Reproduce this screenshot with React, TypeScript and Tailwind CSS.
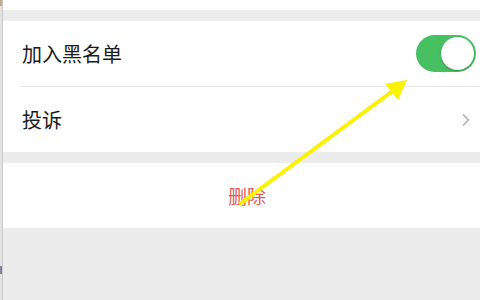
import { ChevronRight } from "lucide-react";

const font = { fontFamily: '"Noto Sans CJK SC", "Noto Sans", sans-serif' };

function Toggle() {
  return (
    <div className="flex h-[37px] w-[60px] items-center justify-end rounded-full bg-[#46c060] p-[2px]">
      <div className="h-[33px] w-[33px] rounded-full bg-white shadow-[0_1px_2px_rgba(0,0,0,0.25)]" />
    </div>
  );
}

export default function App() {
  return (
    <div className="relative flex h-[300px] w-[480px] overflow-hidden bg-[#ececec]" style={font}>
      {/* left edge of a neighbouring window */}
      <div className="flex w-[3px] flex-col justify-between border-r border-[#c9c9c9] bg-[#e2e2e2]">
        <div className="h-[6px] bg-[#c7a98a]" />
        <div className="mb-[26px] h-[8px] bg-[#7d8597]" />
      </div>

      <div className="flex flex-1 flex-col">
        <div className="h-[10px] bg-white" />
        <div className="h-[11px]" />

        <div className="bg-white">
          <div className="flex h-[65px] items-center justify-between pl-[19px] pr-[4px]">
            <span className="text-[20px] leading-none text-[#1b1b1b]">加入黑名单</span>
            <Toggle />
          </div>
          <div className="ml-[17px] h-px bg-[#e8e8e8]" />
          <div className="flex h-[65px] items-center justify-between pl-[19px] pr-[4px]">
            <span className="text-[20px] leading-none text-[#1b1b1b]">投诉</span>
            <ChevronRight className="h-[20px] w-[20px] text-[#b0b0b0]" strokeWidth={2} />
          </div>
        </div>

        <div className="h-[11px]" />

        <div className="flex h-[65px] items-center justify-center bg-white pl-[11px]">
          <span className="text-[19px] leading-none text-[#dc5d58]">删除</span>
        </div>
      </div>

      {/* annotation arrow */}
      <svg className="pointer-events-none absolute left-0 top-0" width="480" height="300" viewBox="0 0 480 300">
        <line x1="241" y1="203" x2="394" y2="90" stroke="#fbf200" strokeWidth="4" strokeLinecap="round" />
        <polygon points="407,80 385,84 398,100" fill="#fbf200" />
      </svg>
    </div>
  );
}
